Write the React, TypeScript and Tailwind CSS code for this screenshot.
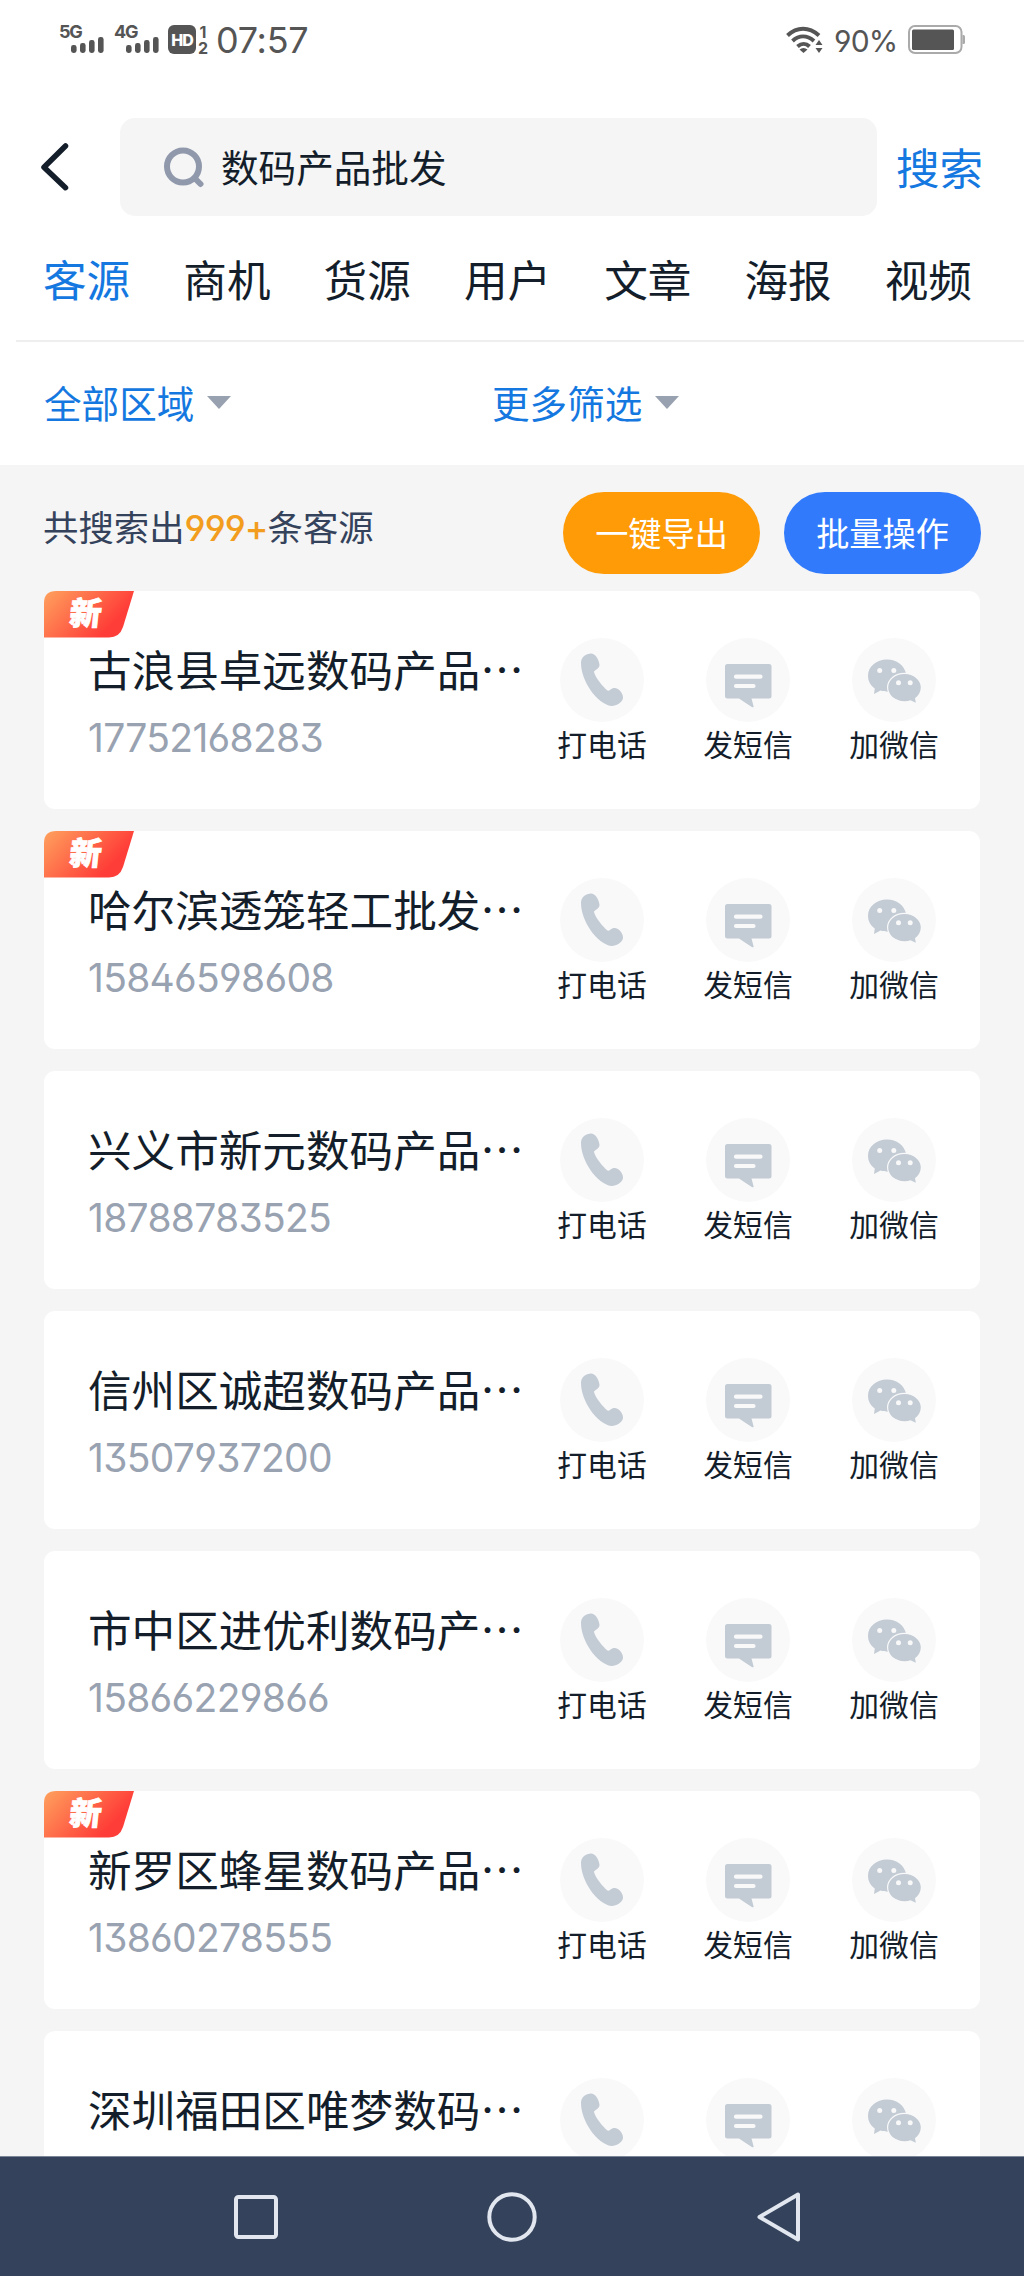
import type { ReactNode } from "react";

interface Lead {
  name: string;
  phone: string;
  isNew: boolean;
}

const tabs = ["客源", "商机", "货源", "用户", "文章", "海报", "视频"];

const leads: Lead[] = [
  { name: "古浪县卓远数码产品…", phone: "17752168283", isNew: true },
  { name: "哈尔滨透笼轻工批发…", phone: "15846598608", isNew: true },
  { name: "兴义市新元数码产品…", phone: "18788783525", isNew: false },
  { name: "信州区诚超数码产品…", phone: "13507937200", isNew: false },
  { name: "市中区进优利数码产…", phone: "15866229866", isNew: false },
  { name: "新罗区蜂星数码产品…", phone: "13860278555", isNew: true },
  { name: "深圳福田区唯梦数码…", phone: "", isNew: false },
];

function Signal({ label }: { label: string }) {
  return (
    <div className="relative h-[34px] w-[46px]">
      <span className="absolute top-0 left-0 font-['Inter'] text-[18px] leading-[17px] font-bold tracking-[-1.200px]">{label}</span>
      <svg className="absolute left-[12px] top-[14px]" width="34" height="17" viewBox="0 0 34 17" fill="currentColor">
        <rect x="0" y="8" width="5.600" height="8" rx="2.400" />
        <rect x="9" y="6" width="5.600" height="10" rx="2.400" />
        <rect x="18" y="3" width="5.600" height="13" rx="2.400" />
        <rect x="27" y="0" width="5.600" height="16" rx="2.400" />
      </svg>
    </div>
  );
}

function StatusBar() {
  return (
    <div className="flex h-[80px] items-start pt-[23px] pl-[59px] text-[#555555]">
      <Signal label="5G" />
      <div className="ml-[9px]">
        <Signal label="4G" />
      </div>
      <div className="mt-[2px] ml-[8px] flex h-[29px] w-[28px] items-center justify-center rounded-[6px] bg-[#555555] font-['Inter'] text-[16px] font-extrabold tracking-[-1px] text-white">
        HD
      </div>
      <div className="ml-[1px] flex w-[12px] flex-col items-center pt-[1px] font-['Inter'] text-[16px] leading-[16px] font-bold">
        <span>1</span>
        <span>2</span>
      </div>
      <div className="ml-[7px] w-[96px] font-['Inter'] text-[36px] leading-[35px] tracking-[-0.300px] whitespace-nowrap">07:57</div>
      <svg className="mt-[3px] ml-[474px]" width="38" height="28" viewBox="0 0 38 28" fill="none" stroke="currentColor" strokeWidth="4">
        <path d="M1.500 9.500C11 .5 23 .5 33 9.500M6.500 15C13 9 21 9 28 15M11.500 20.500c4-3.400 8.500-3.400 12 0" />
        <path d="M17.500 27l-4-3.500c2.500-2 5.500-2 8 0z" fill="currentColor" stroke="none" />
        <path d="M33 14l3.500 5h-7zM33 27l3.500-5h-7z" fill="currentColor" stroke="none" />
      </svg>
      <div className="mt-[3px] ml-[10px] w-[64px] font-['Inter'] text-[30px] leading-[30px] tracking-[-0.800px] whitespace-nowrap [font-feature-settings:'ss01']">90%</div>
      <svg className="mt-[2px] ml-[10px]" width="58" height="30" viewBox="0 0 58 30">
        <rect x="1" y="1" width="52.500" height="27" rx="6" fill="#fff" stroke="#aaaaaa" strokeWidth="2" />
        <rect x="4" y="4.500" width="42" height="20.500" rx="1.500" fill="#555555" />
        <path d="M54.500 10h1a1.500 1.500 0 0 1 1.500 1.500v6a1.500 1.500 0 0 1-1.500 1.500h-1z" fill="#aaaaaa" />
      </svg>
    </div>
  );
}

function SearchHeader() {
  return (
    <div className="flex h-[173px] items-start pt-[38px]">
      <svg className="mt-[24px] ml-[38px]" width="34" height="52" viewBox="0 0 34 52" fill="none" stroke="#141e2b" strokeWidth="5.500" strokeLinecap="round" strokeLinejoin="round">
        <path d="M27.500 4L6 25.200l21.500 20.500" />
      </svg>
      <div className="ml-[48px] flex h-[98px] w-[757px] items-center rounded-[15px] bg-[#f5f5f5] pl-[43px]">
        <svg width="42" height="42" viewBox="0 0 42 42" fill="none" stroke="#9099ac" strokeWidth="6" strokeLinecap="round">
          <circle cx="20" cy="20.500" r="16" />
          <path d="M33 33.500l4.500 4.500" />
        </svg>
        <span className="mb-[3px] ml-[16px] text-[37.600px] leading-[50px] text-[#141e2b]">数码产品批发</span>
      </div>
      <span className="mt-[23px] ml-[19px] text-[43.600px] leading-[50px] text-[#1478e0]">搜索</span>
    </div>
  );
}

function Filter({ label }: { label: string }) {
  return (
    <div className="flex items-center">
      <span className="text-[37.600px] leading-[50px] text-[#1478e0]">{label}</span>
      <svg className="ml-[13px]" width="24" height="13" viewBox="0 0 24 13" fill="#98a1b0">
        <path d="M0 0h24L12 13z" />
      </svg>
    </div>
  );
}

function NewBadge() {
  return (
    <div className="absolute top-0 left-0 h-[47px] w-[90px]">
      <svg className="absolute inset-0" width="90" height="47" viewBox="0 0 90 47">
        <defs>
          <linearGradient id="newBadge" x1="0" y1="0.100" x2="1" y2="0.600">
            <stop offset="0" stopColor="#ff9d5c" />
            <stop offset="0.850" stopColor="#ff3d38" />
          </linearGradient>
        </defs>
        <path d="M12 0H90L79 36Q75.500 46.500 65 46.500H0V12Q0 0 12 0z" fill="url(#newBadge)" />
      </svg>
      <span className="absolute top-0 left-[26px] -skew-x-6 text-[32px] leading-[40px] font-black text-white [-webkit-text-stroke:0.800px_white]">新</span>
    </div>
  );
}

function PhoneIcon() {
  return (
    <svg width="84" height="84" viewBox="0 0 84 84" fill="#c3cbd5">
      <path d="M21 25C21 19 26 15.500 31 15.500C35 15.500 39 21 39.500 27C39.500 31 34 32 34 34C35 39 43 49 47.500 52.500C50 53.500 51 50 54.500 50C59 50 63.500 56 63 60C62.500 64 57 68 51.500 68C37 66 21 43 21 25z" />
    </svg>
  );
}

function SmsIcon() {
  return (
    <svg width="84" height="84" viewBox="0 0 84 84">
      <path d="M21.500 26h41.500a2.500 2.500 0 0 1 2.500 2.500v29.500a2.500 2.500 0 0 1-2.500 2.500h-17.500l2 7.500q.3 2-1.700 1L33 60.500H21.500a2.500 2.500 0 0 1-2.500-2.500V28.500a2.500 2.500 0 0 1 2.500-2.500z" fill="#c3cbd5" />
      <path d="M30 38.700h24.500M30 48h17.500" stroke="#f9f9f9" strokeWidth="4.200" strokeLinecap="round" />
    </svg>
  );
}

function WechatIcon() {
  return (
    <svg width="84" height="84" viewBox="0 0 84 84" fill="#c3cbd5">
      <path d="M35 21.500c-10.500 0-19 7-19 16.300 0 5.200 2.500 9.600 6.800 12.700L22 56l6.500-3.500c3 1 6.500 1.300 9.500 1.100l16-18C52.500 27.500 44.500 21.500 35 21.500z" />
      <path d="M52.500 36c-9.200 0-16.300 6-16.300 13.500s7.200 13.700 16.300 13.700c2.200 0 4.200-.3 6-.9l5.300 2.500-.8-4.600c3.600-2.500 5.800-6.500 5.800-10.700C68.800 42 61.500 36 52.500 36z" stroke="#f9f9f9" strokeWidth="2.400" paintOrder="stroke" />
      <g fill="#f9f9f9">
        <circle cx="27.700" cy="32.500" r="2.500" />
        <circle cx="41.800" cy="32.500" r="2.500" />
        <circle cx="46.500" cy="44.700" r="2.500" />
        <circle cx="58.200" cy="44.700" r="2.500" />
      </g>
    </svg>
  );
}

function Action({ label, children }: { label: string; children: ReactNode }) {
  return (
    <button className="flex w-[92px] flex-col items-center">
      <span className="size-[84px] rounded-full bg-[#f9f9f9]">{children}</span>
      <span className="mt-[1px] text-[29.800px] leading-[40px] whitespace-nowrap text-[#141e2b]">{label}</span>
    </button>
  );
}

function LeadCard({ lead }: { lead: Lead }) {
  return (
    <div className="relative flex h-[218px] shrink-0 rounded-[11px] bg-white pl-[44px]">
      {lead.isNew && <NewBadge />}
      <div className="w-[468px] pt-[47px]">
        <div className="text-[43.600px] leading-[60px] whitespace-nowrap text-[#141e2b]">{lead.name}</div>
        <div className="mt-[10px] font-['Inter'] text-[39px] leading-[60px] tracking-[-0.700px] text-[#98a2b1] [font-feature-settings:'ss01']">
          {lead.phone}
        </div>
      </div>
      <div className="flex gap-[54px] pt-[47px]">
        <Action label="打电话"><PhoneIcon /></Action>
        <Action label="发短信"><SmsIcon /></Action>
        <Action label="加微信"><WechatIcon /></Action>
      </div>
    </div>
  );
}

function NavBar() {
  return (
    <div className="flex h-[120px] shrink-0 items-center border-t border-[#7c8698] bg-[#34425b] pl-[230px]">
      <svg width="52" height="52" viewBox="0 0 52 52" fill="none" stroke="#e1e6ef" strokeWidth="4">
        <rect x="6" y="6" width="40" height="40" rx="2.500" />
      </svg>
      <svg className="ml-[204px]" width="52" height="52" viewBox="0 0 52 52" fill="none" stroke="#e1e6ef" strokeWidth="4">
        <circle cx="26" cy="26" r="22.700" />
      </svg>
      <svg className="ml-[216px]" width="52" height="52" viewBox="0 0 52 52" fill="none" stroke="#e1e6ef" strokeWidth="4" strokeLinejoin="round">
        <path d="M5.500 26L44 3.500v45z" />
      </svg>
    </div>
  );
}

export default function App() {
  return (
    <div className="flex h-[2276px] w-[1024px] flex-col overflow-hidden bg-[#f5f5f5] font-['Noto_Sans_CJK_SC',sans-serif]">
      <div className="h-[465px] shrink-0 bg-white">
        <StatusBar />
        <SearchHeader />

        {/* Tabs */}
        <div className="ml-[16px] flex h-[89px] justify-between border-b-2 border-[#eeeeee] pr-[52px] pl-[27px]">
          {tabs.map((tab, i) => (
            <span key={tab} className={`text-[43.600px] leading-[50px] ${i === 0 ? "text-[#1478e0]" : "text-[#141e2b]"}`}>
              {tab}
            </span>
          ))}
        </div>

        {/* Filters */}
        <div className="grid grid-cols-[448px_1fr] pt-[35px] pl-[44px]">
          <Filter label="全部区域" />
          <Filter label="更多筛选" />
        </div>
      </div>

      {/* Result summary */}
      <div className="flex h-[126px] shrink-0 items-start pt-[27px] pr-[43px] pl-[43px]">
        <div className="mt-[9px] text-[35.400px] leading-[50px] text-[#34425b]">
          共搜索出
          <span className="font-['Inter'] font-medium tracking-[-0.900px] text-[#f29d1e] [font-feature-settings:'ss01']">999+</span>
          条客源
        </div>
        <button className="ml-auto h-[82px] w-[197px] rounded-full bg-[#ff9b07] pb-[2px] text-[33.200px] text-white">一键导出</button>
        <button className="ml-[24px] h-[82px] w-[197px] rounded-full bg-[#317afc] pb-[2px] text-[33.200px] text-white">批量操作</button>
      </div>

      {/* Lead list */}
      <div className="flex min-h-0 flex-1 flex-col gap-[22px] overflow-hidden px-[44px]">
        {leads.map((lead) => (
          <LeadCard key={lead.name} lead={lead} />
        ))}
      </div>

      <NavBar />
    </div>
  );
}
